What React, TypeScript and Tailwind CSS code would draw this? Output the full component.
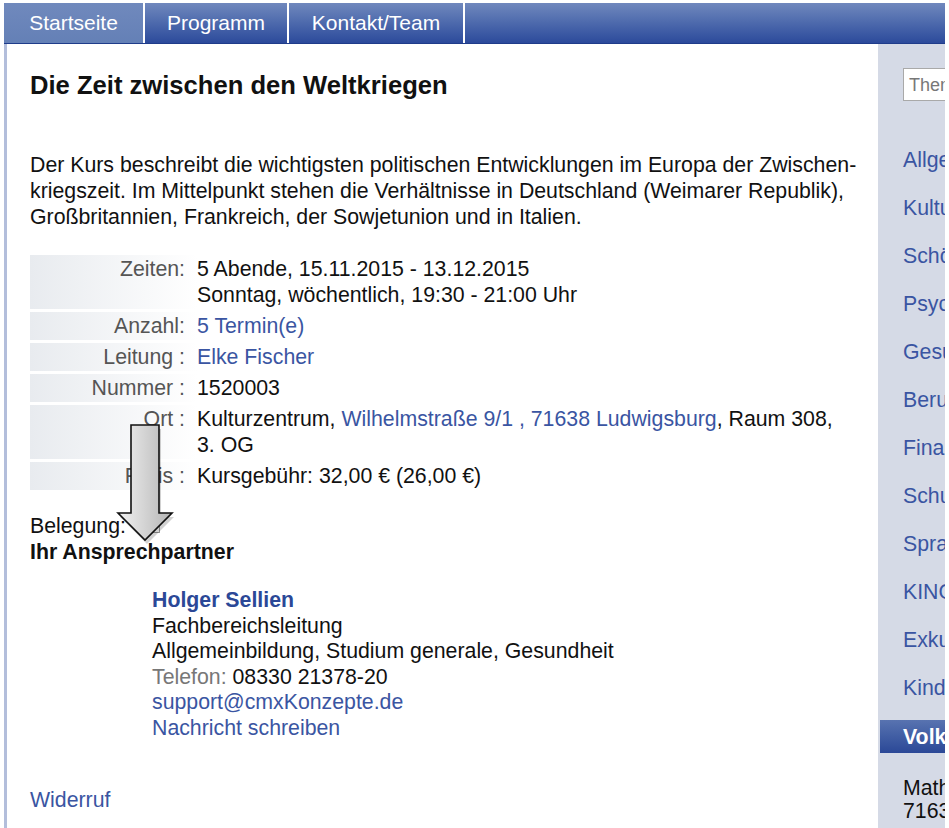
import React from "react";

const sidebarLinks = [
  "Allgemeinbildung",
  "Kultur und Gestalten",
  "Schöne Künste",
  "Psychologie",
  "Gesundheit",
  "Beruf und Karriere",
  "Finanzen",
  "Schulabschlüsse",
  "Sprachen",
  "KINO im Kulturzentrum",
  "Exkursionen",
  "Kinder und Jugend",
];

function DownArrow() {
  return (
    <svg
      className="absolute left-[103px] top-[376px]"
      width="70"
      height="130"
      viewBox="0 0 70 130"
    >
      <defs>
        <linearGradient id="arrowFill" x1="0" y1="0" x2="1" y2="0">
          <stop offset="0" stopColor="#f2f2f2" />
          <stop offset="1" stopColor="#b4b4b4" />
        </linearGradient>
      </defs>
      <path
        d="M21 7 L49 7 L49 95 L62 95 L35 122 L8 95 L21 95 Z"
        fill="#000"
        opacity="0.18"
        transform="translate(2 2)"
      />
      <path
        d="M21 5 L49 5 L49 93 L62 93 L35 120 L8 93 L21 93 Z"
        fill="url(#arrowFill)"
        stroke="#111"
        strokeWidth="1.6"
        strokeLinejoin="miter"
      />
    </svg>
  );
}

export default function App() {
  const rows: { label: string; value: React.ReactNode }[] = [
    {
      label: "Zeiten:",
      value: (
        <>
          5 Abende, 15.11.2015 - 13.12.2015
          <br />
          Sonntag, wöchentlich, 19:30 - 21:00 Uhr
        </>
      ),
    },
    { label: "Anzahl:", value: <span className="text-[#3a55a2]">5 Termin(e)</span> },
    { label: "Leitung :", value: <span className="text-[#3a55a2]">Elke Fischer</span> },
    { label: "Nummer :", value: "1520003" },
    {
      label: "Ort :",
      value: (
        <>
          Kulturzentrum,{" "}
          <span className="text-[#3a55a2]">Wilhelmstraße 9/1 , 71638 Ludwigsburg</span>, Raum 308,
          <br />
          3. OG
        </>
      ),
    },
    { label: "Preis :", value: "Kursgebühr: 32,00 € (26,00 €)" },
  ];

  return (
    <div className="h-[828px] w-[949px] overflow-hidden bg-white font-['Liberation_Sans',Arial,sans-serif] text-[21.3px] leading-[26px] text-[#111]">
      <div className="ml-[4px] w-[941px] overflow-hidden pt-[3px]">
        {/* top navigation */}
        <nav className="flex h-[41px] border-b border-[#1f3c8a] bg-gradient-to-b from-[#7088bd] to-[#2c4a9b] text-[21px] text-white">
          <div className="flex w-[139px] items-center justify-center bg-gradient-to-b from-[#7089bd] to-[#6480b6]">
            Startseite
          </div>
          <div className="w-[2px] bg-white" />
          <div className="flex w-[142px] items-center justify-center">Programm</div>
          <div className="w-[2px] bg-white" />
          <div className="flex w-[174px] items-center justify-center">Kontakt/Team</div>
          <div className="w-[2px] bg-white" />
        </nav>

        <div className="flex border-l-[3px] border-[#b3bedb]">
          {/* main column */}
          <main className="relative w-[871px] shrink-0 pl-[23px] pr-[10px]">
            <h1 className="mt-[26px] text-[25.6px] font-bold leading-[30px]">
              Die Zeit zwischen den Weltkriegen
            </h1>

            <p className="mt-[52px]">
              Der Kurs beschreibt die wichtigsten politischen Entwicklungen im Europa der Zwischen-
              <br />
              kriegszeit. Im Mittelpunkt stehen die Verhältnisse in Deutschland (Weimarer Republik),
              <br />
              Großbritannien, Frankreich, der Sowjetunion und in Italien.
            </p>

            <div className="mt-[25px] flex flex-col gap-[3px]">
              {rows.map((r) => (
                <div key={r.label} className="flex">
                  <div className="w-[167px] shrink-0 bg-gradient-to-r from-[#e8ebef] to-white py-[1px] pr-[12px] text-right text-[#555]">
                    {r.label}
                  </div>
                  <div className="py-[1px]">{r.value}</div>
                </div>
              ))}
            </div>

            <p className="mt-[23px]">
              Belegung:{" "}
              <span className="ml-[14px] inline-block h-[12px] w-[14px] border border-[#999] align-middle" />
            </p>
            <p className="font-bold">Ihr Ansprechpartner</p>

            <div className="mt-[23px] pl-[122px] leading-[25.6px]">
              <div className="font-bold text-[#2b4897]">Holger Sellien</div>
              <div>Fachbereichsleitung</div>
              <div>Allgemeinbildung, Studium generale, Gesundheit</div>
              <div>
                <span className="text-[#777]">Telefon:</span> 08330 21378-20
              </div>
              <div className="text-[#3a55a2]">support@cmxKonzepte.de</div>
              <div className="text-[#3a55a2]">Nachricht schreiben</div>
            </div>

            <div className="mt-[45px] text-[#3a55a2]">Widerruf</div>

            <DownArrow />
          </main>

          {/* right sidebar */}
          <aside className="min-h-[800px] w-[260px] shrink-0 bg-[#d5dae6]">
            <div className="pl-[25px] pt-[24px]">
              <div className="flex h-[33px] w-[220px] items-center border border-[#a9a9a9] bg-white pl-[5px] text-[18px] text-[#777]">
                Themen suchen
              </div>
            </div>
            <ul className="mt-[46px] flex flex-col gap-[22px] pl-[25px] text-[#3a55a2]">
              {sidebarLinks.map((l) => (
                <li key={l} className="whitespace-nowrap">
                  {l}
                </li>
              ))}
            </ul>
            <div className="ml-[2px] mt-[19px] flex h-[33px] items-center bg-gradient-to-b from-[#5873b0] to-[#2b4897] pl-[23px] font-bold text-white">
              Volkshochschule
            </div>
            <div className="mt-[24px] pl-[25px] leading-[23px]">
              <div>Mathildenstraße 21</div>
              <div>71638 Ludwigsburg</div>
            </div>
          </aside>
        </div>
      </div>
    </div>
  );
}
